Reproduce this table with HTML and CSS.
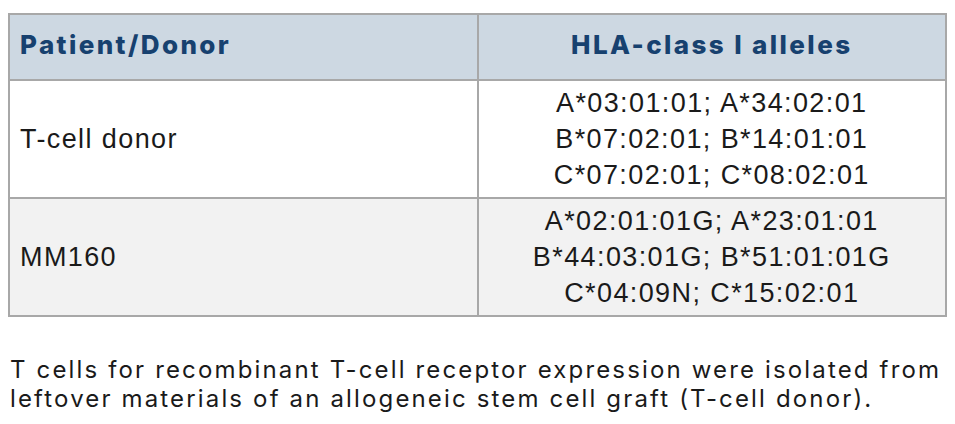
FILE: index.html
```html
<!DOCTYPE html>
<html>
<head>
<meta charset="utf-8">
<link rel="stylesheet" href="styles.css">
</head>
<body>
<div class="wrap">
  <table class="hla">
    <thead>
      <tr>
        <th class="c-left">Patient/Donor</th>
        <th class="c-center">HLA-class I alleles</th>
      </tr>
    </thead>
    <tbody>
      <tr class="row-white">
        <td class="c-left">T-cell donor</td>
        <td class="c-center">A*03:01:01; A*34:02:01<br>B*07:02:01; B*14:01:01<br>C*07:02:01; C*08:02:01</td>
      </tr>
      <tr class="row-grey">
        <td class="c-left">MM160</td>
        <td class="c-center">A*02:01:01G; A*23:01:01<br>B*44:03:01G; B*51:01:01G<br>C*04:09N; C*15:02:01</td>
      </tr>
    </tbody>
  </table>
  <p class="caption">T cells for recombinant T-cell receptor expression were isolated from leftover materials of an allogeneic stem cell graft (T-cell donor).</p>
</div>
</body>
</html>
```
FILE: styles.css
```css
html, body {
  margin: 0;
  padding: 0;
  background: #ffffff;
}
.wrap {
  padding: 13px 8px 0 8px;
}
.hla {
  width: 939px;
  border-collapse: collapse;
  table-layout: fixed;
}
.hla th, .hla td {
  border: 2px solid #a8a8a8;
  width: 50%;
}
.hla th {
  background: #cdd8e2;
  color: #17416f;
  font-family: Inter, "Noto Sans", sans-serif;
  font-weight: 800;
  font-size: 26px;
  height: 59px;
  padding: 0 10px 5px 10px;
  letter-spacing: 2.4px;
}
.hla td {
  font-family: "Liberation Sans", Arial, sans-serif;
  font-size: 27px;
  letter-spacing: 1.4px;
  line-height: 36px;
  color: #1a1a1a;
  padding: 4px 10px 4px 10px;
}
.c-left { text-align: left; }
.c-center { text-align: center; }
.row-white td { background: #ffffff; }
.row-grey td { background: #f2f2f2; }
.caption {
  margin: 38px 0 0 2px;
  width: 945px;
  font-family: Inter, "Noto Sans", sans-serif;
  font-size: 24px;
  line-height: 29px;
  letter-spacing: 2.15px;
  color: #1a1a1a;
}
```
